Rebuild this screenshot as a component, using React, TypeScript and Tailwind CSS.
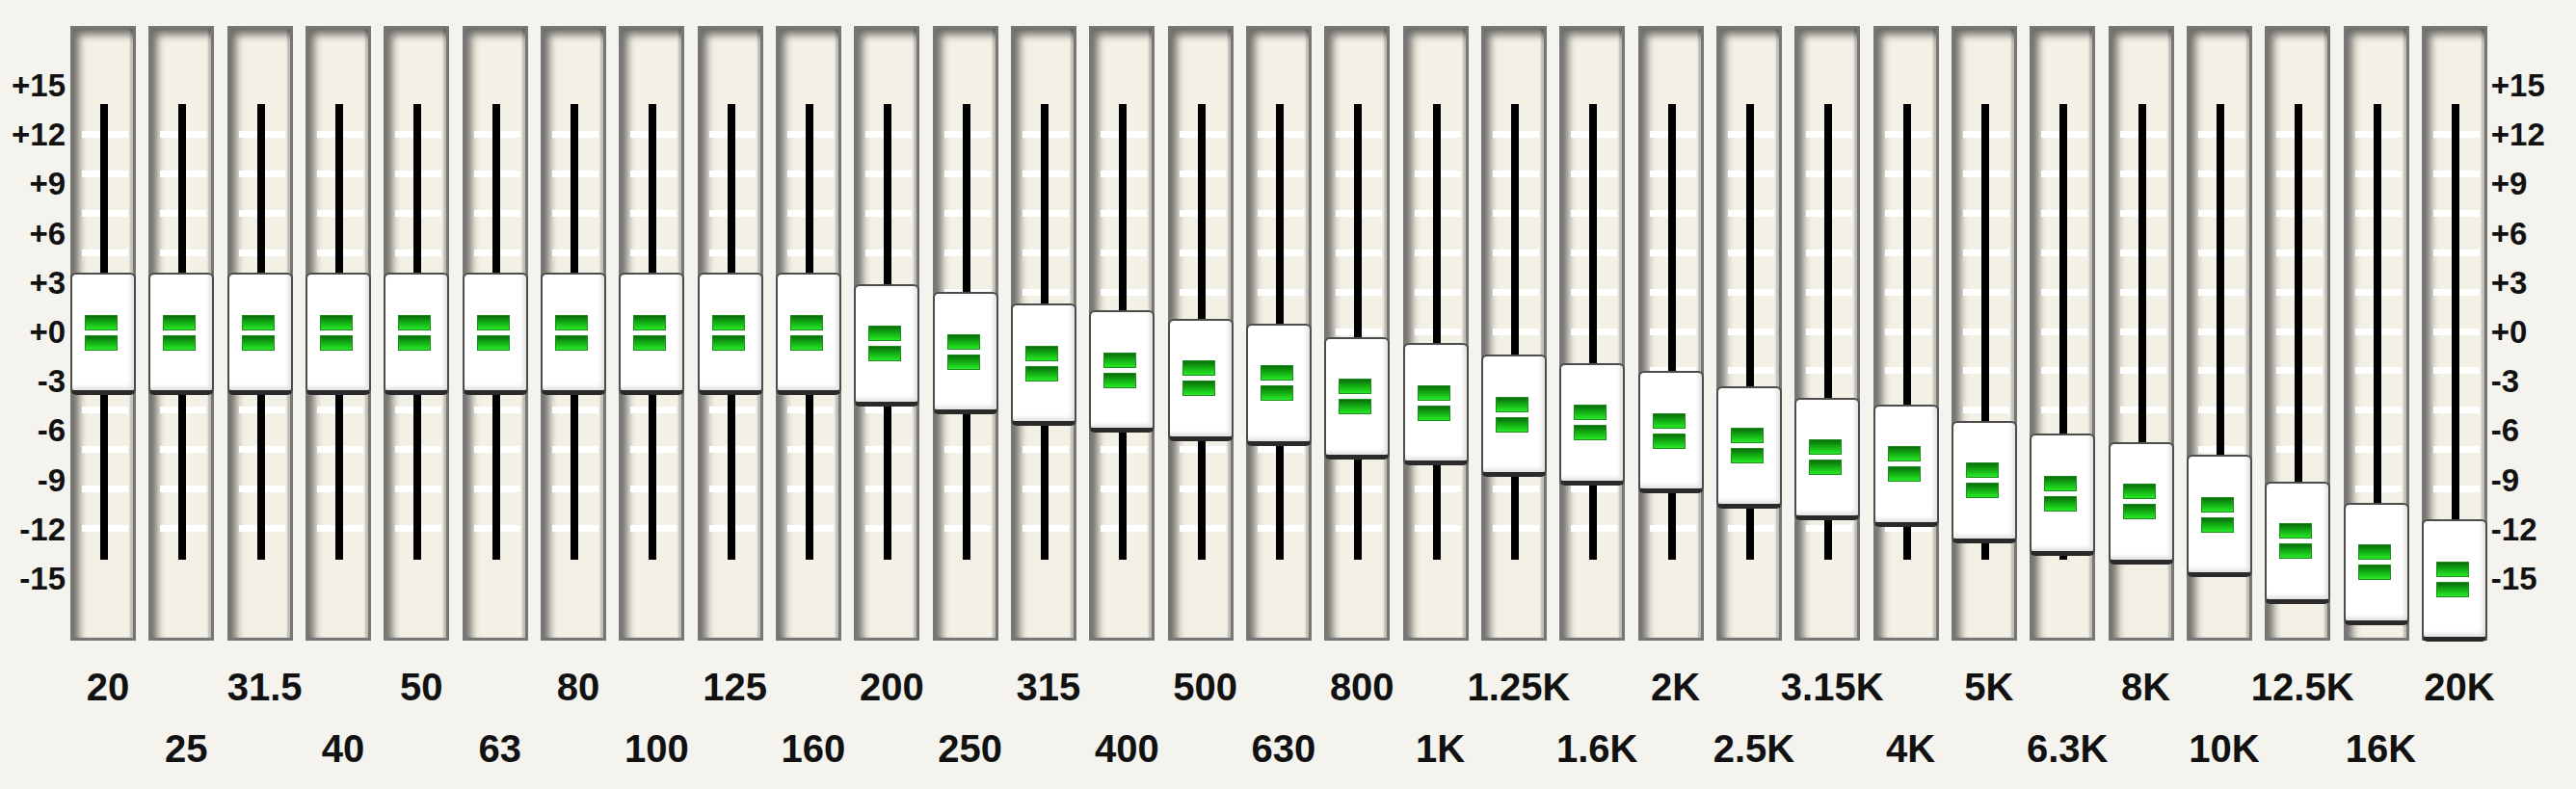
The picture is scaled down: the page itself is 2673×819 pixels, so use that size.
import React from 'react';

interface Band {
  label: string;
  gain: number; // dB, -15..+15
}

const bands: Band[] = [
  { label: '20', gain: 0 },
  { label: '25', gain: 0 },
  { label: '31.5', gain: 0 },
  { label: '40', gain: 0 },
  { label: '50', gain: 0 },
  { label: '63', gain: 0 },
  { label: '80', gain: 0 },
  { label: '100', gain: 0 },
  { label: '125', gain: 0 },
  { label: '160', gain: 0 },
  { label: '200', gain: -0.7 },
  { label: '250', gain: -1.2 },
  { label: '315', gain: -1.9 },
  { label: '400', gain: -2.3 },
  { label: '500', gain: -2.8 },
  { label: '630', gain: -3.1 },
  { label: '800', gain: -3.9 },
  { label: '1K', gain: -4.3 },
  { label: '1.25K', gain: -5.0 },
  { label: '1.6K', gain: -5.5 },
  { label: '2K', gain: -6.0 },
  { label: '2.5K', gain: -6.9 },
  { label: '3.15K', gain: -7.6 },
  { label: '4K', gain: -8.0 },
  { label: '5K', gain: -9.0 },
  { label: '6.3K', gain: -9.8 },
  { label: '8K', gain: -10.3 },
  { label: '10K', gain: -11.1 },
  { label: '12.5K', gain: -12.7 },
  { label: '16K', gain: -14.0 },
  { label: '20K', gain: -15.0 },
];

const scale = ['+15', '+12', '+9', '+6', '+3', '+0', '-3', '-6', '-9', '-12', '-15'];

// pixels per dB of knob travel
const PX_PER_DB = 17.07;
const TICKS = Array.from({ length: 11 }, (_, i) => i);

const ScaleColumn: React.FC<{ side: 'left' | 'right' }> = ({ side }) => (
  <div
    className={
      side === 'left'
        ? 'flex w-[73px] flex-col items-end pr-[5px] pt-[36px]'
        : 'flex flex-col items-start pl-[4px] pt-[36px]'
    }
  >
    {scale.map((s) => (
      <div key={s} className="flex h-[51.2px] items-center text-[33px] leading-none">
        {s}
      </div>
    ))}
  </div>
);

const Grip: React.FC = () => (
  <div className="flex flex-col gap-[5px] pr-[4px]">
    <div className="h-[16px] w-[34px] border border-[#1c8f1c] bg-linear-to-b from-[#0a6e0a] via-[#14b014] to-[#27e827]" />
    <div className="h-[16px] w-[34px] border border-[#1c8f1c] bg-linear-to-b from-[#0a6e0a] via-[#14b014] to-[#27e827]" />
  </div>
);

const Fader: React.FC<{ gain: number }> = ({ gain }) => (
  <div className="relative h-[638px] w-[68px] border-[3px] border-[#767676] bg-[#f3f0e5] shadow-[inset_8px_8px_8px_-2px_rgba(0,0,0,0.55),inset_-3px_0_2px_rgba(0,0,0,0.22)]">
    {/* tick marks */}
    {TICKS.map((i) => (
      <div
        key={i}
        className="absolute left-[9px] h-[7px] w-[48px] bg-white blur-[0.5px]"
        style={{ top: 106 + i * 40.9 }}
      />
    ))}
    {/* slot */}
    <div className="absolute left-[28px] top-[78px] h-[473px] w-[8px] bg-black" />
    {/* thumb */}
    <div
      className="absolute -left-[3px] flex h-[127px] w-[68px] items-center justify-center rounded-[6px] border-2 border-b-[5px] border-[#4c4c4c] border-b-[#2a2a2a] bg-white shadow-[inset_-3px_-3px_4px_rgba(0,0,0,0.12)]"
      style={{ top: 253 - gain * PX_PER_DB }}
    >
      <Grip />
    </div>
  </div>
);

export default function App() {
  return (
    <div className="min-h-screen w-full bg-[#f4f3ee] pt-[27px] font-['Liberation_Sans',Arial,sans-serif] font-bold text-[#111]">
      <div className="flex">
        <ScaleColumn side="left" />
        <div className="grid grid-cols-[repeat(31,68px)] gap-x-[13.33px]">
          {bands.map((b) => (
            <Fader key={b.label} gain={b.gain} />
          ))}
        </div>
        <ScaleColumn side="right" />
      </div>

      {/* frequency labels, staggered in two rows */}
      <div className="ml-[73px] mt-[16px] grid grid-cols-[repeat(31,68px)] grid-rows-[64px_64px] gap-x-[13.33px]">
        {bands.map((b, i) => (
          <div
            key={b.label}
            className={
              (i % 2 === 0 ? 'row-start-1' : 'row-start-2') +
              ' flex items-center justify-center whitespace-nowrap pl-[10px] text-[40px] leading-none'
            }
            style={{ gridColumnStart: i + 1 }}
          >
            {b.label}
          </div>
        ))}
      </div>
    </div>
  );
}
